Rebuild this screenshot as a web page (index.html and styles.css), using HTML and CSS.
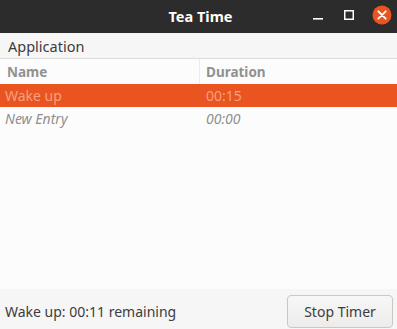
FILE: index.html
```html
<!DOCTYPE html>
<html>
<head>
<meta charset="utf-8">
<link rel="stylesheet" href="styles.css">
</head>
<body>
<div class="window">
  <div class="titlebar">
    <div class="title">Tea Time</div>
    <div class="controls">
      <svg class="ctl" width="14" height="14" viewBox="0 0 14 14"><rect x="2" y="10" width="10" height="1.6" fill="#ffffff"/></svg>
      <svg class="ctl" width="14" height="14" viewBox="0 0 14 14"><rect x="2.75" y="2.75" width="8.5" height="8.5" fill="none" stroke="#ffffff" stroke-width="1.5"/></svg>
      <svg class="close" width="20" height="20" viewBox="0 0 20 20"><circle cx="10" cy="10" r="9.5" fill="#e95420"/><path d="M6.3 6.3 L13.7 13.7 M13.7 6.3 L6.3 13.7" stroke="#ffffff" stroke-width="1.8" stroke-linecap="round"/></svg>
    </div>
  </div>
  <div class="menubar"><span class="menu-item">Application</span></div>
  <div class="list">
    <div class="row header">
      <div class="cell c1">Name</div>
      <div class="cell c2">Duration</div>
    </div>
    <div class="row selected">
      <div class="cell c1">Wake up</div>
      <div class="cell c2">00:15</div>
    </div>
    <div class="row new">
      <div class="cell c1">New Entry</div>
      <div class="cell c2">00:00</div>
    </div>
  </div>
  <div class="statusbar">
    <span class="status">Wake up: 00:11 remaining</span>
    <button class="btn">Stop Timer</button>
  </div>
</div>
</body>
</html>
```

FILE: styles.css
```css
html, body {
  margin: 0;
  padding: 0;
  width: 397px;
  height: 329px;
  overflow: hidden;
  background: #f6f6f6;
}
.window {
  width: 397px;
  height: 329px;
  display: flex;
  flex-direction: column;
  font-family: "Noto Sans", "DejaVu Sans", sans-serif;
  font-size: 14px;
}
.titlebar {
  height: 33px;
  flex: none;
  background: #2c2c2c;
  position: relative;
  display: flex;
  align-items: center;
  justify-content: center;
}
.title {
  color: #ffffff;
  font-weight: bold;
  font-size: 14.5px;
  margin-left: 4px;
  margin-top: -1px;
}
.controls {
  position: absolute;
  right: 5px;
  top: 5px;
  display: flex;
  align-items: center;
  gap: 17px;
}
.ctl { display: block; }
.close { display: block; margin-left: -1px; }
.menubar {
  height: 25px;
  flex: none;
  background: #f6f6f6;
  border-bottom: 1px solid #dcdcdc;
  display: flex;
  align-items: center;
  padding-left: 8px;
  color: #3c3c3c;
  font-size: 14.5px;
}
.list {
  height: 230px;
  flex: none;
  background: #fcfcfc;
}
.row {
  display: flex;
  height: 24px;
  align-items: center;
}
.cell { box-sizing: border-box; height: 100%; display: flex; align-items: center; }
.c1 { width: 200px; padding-left: 5px; }
.c2 { flex: 1; padding-left: 6px; }
.header .cell {
  color: #919191;
  font-weight: bold;
  font-size: 13.5px;
}
.header .c1 { border-right: 1px solid #ebebeb; padding-left: 7px; }
.header .c2 { padding-left: 6px; }
.header { height: 25px; }
.selected {
  background: #e95420;
  color: #f5a180;
  height: 23px;
}
.new {
  color: #8e9091;
  font-style: italic;
  height: 23px;
}
.statusbar {
  flex: 1;
  display: flex;
  align-items: center;
  justify-content: space-between;
  padding: 0 4px 0 5px;
  background: #f6f6f6;
}
.status {
  color: #3c3c3c;
  font-size: 14px;
  margin-top: 5px;
}
.btn {
  width: 106px;
  height: 33px;
  margin-top: 4px;
  border: 1px solid #cdc7c2;
  border-radius: 4px;
  background: linear-gradient(#f7f7f7, #eeeceb);
  color: #3c3c3c;
  font-family: "Noto Sans", "DejaVu Sans", sans-serif;
  font-size: 14px;
  padding: 0;
}
```
